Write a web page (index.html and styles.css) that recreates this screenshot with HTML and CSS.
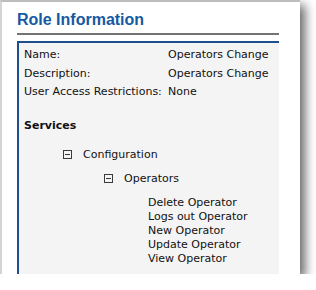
FILE: index.html
```html
<!DOCTYPE html>
<html lang="en">
<head>
    <meta charset="UTF-8">
    <title>Role Information</title>
    <link rel="stylesheet" href="styles.css">
</head>
<body>
    <div class="card">
        <h1 class="title">Role Information</h1>
        <div class="rule"></div>
        <div class="panel">
            <div class="props">
                <span>Name:</span><span>Operators Change</span>
                <span>Description:</span><span>Operators Change</span>
                <span>User Access Restrictions:</span><span>None</span>
            </div>
            <div class="section">Services</div>
            <div class="node lvl1">
                <svg class="toggle" width="9" height="9" viewBox="0 0 9 9"><rect x="0.5" y="0.5" width="8" height="8" fill="none" stroke="#3a3a3a"/><line x1="2" y1="4.5" x2="7" y2="4.5" stroke="#3a3a3a"/></svg>
                <span>Configuration</span>
            </div>
            <div class="node lvl2">
                <svg class="toggle" width="9" height="9" viewBox="0 0 9 9"><rect x="0.5" y="0.5" width="8" height="8" fill="none" stroke="#3a3a3a"/><line x1="2" y1="4.5" x2="7" y2="4.5" stroke="#3a3a3a"/></svg>
                <span>Operators</span>
            </div>
            <ul class="ops">
                <li>Delete Operator</li>
                <li>Logs out Operator</li>
                <li>New Operator</li>
                <li>Update Operator</li>
                <li>View Operator</li>
            </ul>
        </div>
    </div>
</body>
</html>
```

FILE: styles.css
```css
html, body {
    margin: 0;
    background: #fff;
}
.card {
    box-sizing: border-box;
    width: 300px;
    height: 274px;
    border-top: 2px solid #bdbdbd;
    border-left: 2px solid #d4d4d4;
    padding: 8px 0 0 15px;
    background: #fff;
    box-shadow: 5px 5px 10px rgba(0, 0, 0, .6);
    display: flex;
    flex-direction: column;
    overflow: hidden;
}
.title {
    margin: 0;
    font: bold 16px/20px "Liberation Sans", Arial, sans-serif;
    color: #1559a3;
}
.rule {
    width: 262px;
    height: 2px;
    margin-top: 3px;
    background: #747474;
}
.panel {
    flex: 1;
    width: 262px;
    box-sizing: border-box;
    margin-top: 6px;
    border-top: 2px solid #1c4f8c;
    border-left: 2px solid #1c4f8c;
    background: #f4f4f4;
    padding: 3px 0 0 5px;
    font: 11px/18px "DejaVu Sans", Verdana, sans-serif;
    color: #111;
}
.props {
    display: grid;
    grid-template-columns: 144px auto;
    line-height: 18.5px;
}
.section {
    margin-top: 15px;
    font-weight: bold;
}
.node {
    display: flex;
    align-items: center;
    gap: 11px;
}
.toggle {
    display: block;
    flex: none;
}
.lvl1 {
    margin-top: 11px;
    padding-left: 39px;
}
.lvl2 {
    margin-top: 6px;
    padding-left: 80px;
}
.ops {
    list-style: none;
    margin: 8px 0 0;
    padding-left: 124px;
    line-height: 14px;
}
```
